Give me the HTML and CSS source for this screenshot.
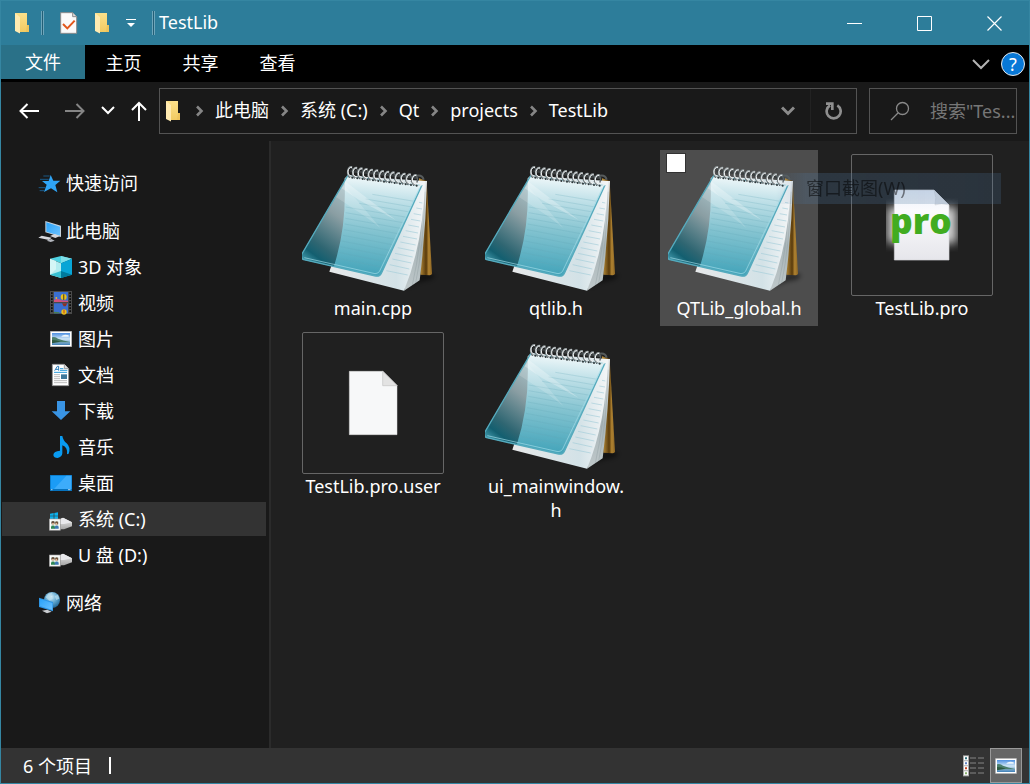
FILE: index.html
```html
<!DOCTYPE html>
<html lang="zh-CN">
<head>
    <meta charset="UTF-8">
    <meta name="viewport" content="width=device-width, initial-scale=1.0">
    <title>TestLib</title>
    <link rel="stylesheet" href="styles.css">
</head>
<body>
    <!-- Shared icons -->
    <svg class="sprite" width="0" height="0" aria-hidden="true">
        <defs>
            <linearGradient id="folderFill" x1="0" y1="0" x2="0" y2="1">
                <stop offset="0" stop-color="#fbe08a"/>
                <stop offset="1" stop-color="#f2cb62"/>
            </linearGradient>
            <linearGradient id="coverFill" x1="0.6" y1="0" x2="0.5" y2="1">
                <stop offset="0" stop-color="#f4fafb"/>
                <stop offset="0.2" stop-color="#c5e3ea"/>
                <stop offset="0.55" stop-color="#83c3d0"/>
                <stop offset="1" stop-color="#41a3b9"/>
            </linearGradient>
            <linearGradient id="glassFill" x1="0.7" y1="0" x2="0.3" y2="1">
                <stop offset="0" stop-color="#a9c3c9"/>
                <stop offset="0.35" stop-color="#8a9ea3"/>
                <stop offset="0.75" stop-color="#2f6672"/>
                <stop offset="0.88" stop-color="#135f70"/>
                <stop offset="1" stop-color="#4098aa"/>
            </linearGradient>
            <linearGradient id="paperFill" x1="0" y1="0" x2="1" y2="0">
                <stop offset="0" stop-color="#e6e8e9"/>
                <stop offset="0.7" stop-color="#d3e2e7"/>
                <stop offset="1" stop-color="#f4f6f7"/>
            </linearGradient>
            <linearGradient id="sideFill" x1="0" y1="0" x2="0" y2="1">
                <stop offset="0" stop-color="#e8ecee"/>
                <stop offset="0.6" stop-color="#a9b5b8"/>
                <stop offset="1" stop-color="#bfc8ca"/>
            </linearGradient>
            <linearGradient id="backFill" x1="0" y1="0" x2="1" y2="0">
                <stop offset="0" stop-color="#c2963f"/>
                <stop offset="0.55" stop-color="#583a0c"/>
                <stop offset="0.75" stop-color="#b08331"/>
                <stop offset="1" stop-color="#8c6524"/>
            </linearGradient>
            <linearGradient id="skyFill" x1="0" y1="0" x2="0" y2="1">
                <stop offset="0" stop-color="#4d8fe0"/>
                <stop offset="0.5" stop-color="#cfe6f6"/>
                <stop offset="1" stop-color="#3f7fb5"/>
            </linearGradient>
            <linearGradient id="screenFill" x1="0" y1="0" x2="1" y2="1">
                <stop offset="0" stop-color="#2aa2f8"/>
                <stop offset="1" stop-color="#6cc2ff"/>
            </linearGradient>
            <linearGradient id="driveFill" x1="0" y1="0" x2="0" y2="1">
                <stop offset="0" stop-color="#f2f2f2"/>
                <stop offset="1" stop-color="#a5a5a5"/>
            </linearGradient>
            <radialGradient id="globeFill" cx="0.45" cy="0.3" r="0.7">
                <stop offset="0" stop-color="#d5ecf5"/>
                <stop offset="0.5" stop-color="#65abd2"/>
                <stop offset="1" stop-color="#1f6796"/>
            </radialGradient>
            <linearGradient id="docFill" x1="0" y1="0" x2="0" y2="1">
                <stop offset="0" stop-color="#eaf0fb"/>
                <stop offset="0.3" stop-color="#fbfbfd"/>
                <stop offset="1" stop-color="#e6e6eb"/>
            </linearGradient>
            <filter id="blurGlow" x="-0.3" y="-0.3" width="1.6" height="1.6">
                <feGaussianBlur stdDeviation="14"/>
            </filter>
            <filter id="blurShadow" x="-0.3" y="-0.5" width="1.6" height="2">
                <feGaussianBlur stdDeviation="6"/>
            </filter>
            <clipPath id="glowClip"><path d="M708 160h216v160h-216z"/></clipPath>
            <clipPath id="coverClip"><path d="M176 92L398 122L278 383Q272 396 260 393L44 344Q35 340 38 328z"/></clipPath>
            <g id="ring" fill="none" stroke-linecap="round">
                <path d="M6 34q-10-12-2-26q8-8 13 4q2 8-1 12" stroke="#596164" stroke-width="4"/>
                <path d="M13 33q-14-4-12-18q3-14 12-13" stroke="#8f989b" stroke-width="4"/>
                <path d="M11 31q-12-5-9-16q3-12 11-11" stroke="#f2f4f4" stroke-width="3"/>
                <circle cx="15" cy="35" r="3" fill="#2c3437"/>
            </g>
        </defs>

        <symbol id="folder" viewBox="0 0 16 22">
            <path d="M1 1h12v12h2v7h-10z" fill="url(#folderFill)"/>
            <path d="M13 13h2v7h-3z" fill="#eec45c"/>
            <path d="M1 1l5 4v16.500l-5-2.500z" fill="#ffeab0"/>
        </symbol>

        <symbol id="chevron" viewBox="0 0 9 12">
            <path d="M2 1.500l4.500 4.500l-4.500 4.500" fill="none" stroke="#868686" stroke-width="2.600"/>
        </symbol>

        <symbol id="picture" viewBox="150 33 66 48">
            <path d="M150 33h66v48h-66z" fill="#8f8f8f"/>
            <path d="M152 35h62v44h-62z" fill="#fff"/>
            <path d="M156 39h54v36h-54z" fill="url(#skyFill)"/>
            <path d="M156 52q10-3 18 4q14 6 36 10v1h-54z" fill="#4b7f6c"/>
            <path d="M156 60q16 1 26 5l-26 5z" fill="#2d5940"/>
            <path d="M186 47q10-5 20-1v4h-22z" fill="#eef6fb"/>
        </symbol>

        <symbol id="drive" viewBox="0 0 69 42">
            <path d="M34 5l8-4l27 14v12l-24 9h-11z" fill="url(#driveFill)"/>
            <path d="M34 5l8-4l27 14l-24 5h-11z" fill="#e9e9ec"/>
            <path d="M1 5h33v34h-33z" fill="#fff" stroke="#9a9a9a" stroke-width="2"/>
            <path d="M6 10h23v24h-23z" fill="#dce8e0"/>
            <circle cx="12" cy="16" r="5" fill="#5a4433"/>
            <circle cx="23" cy="17" r="5" fill="#71543d"/>
            <circle cx="12" cy="19" r="3" fill="#e3b896"/>
            <circle cx="22" cy="20" r="3" fill="#e6bf9e"/>
            <path d="M6 34v-6q6-7 12 0v6z" fill="#2f8755"/>
            <path d="M17 34v-6q6-7 12 0v6z" fill="#3c79b4"/>
        </symbol>

        <symbol id="notepad" viewBox="39 27 426 426">
            <path d="M350 430L400 385L432 386Q445 392 425 404L390 412z" fill="#000" opacity="0.45" filter="url(#blurShadow)"/>
            <path d="M390 100L413 107L429 385Q429 391 422 391L394 389z" fill="url(#backFill)"/>
            <path d="M404 108L414 108Q410 260 392 406L345 437Q385 280 398 118z" fill="url(#sideFill)"/>
            <path d="M403 140Q398 300 370 420M408 140Q404 300 380 414" fill="none" stroke="#879598" stroke-width="1"/>
            <path d="M176 92L408 108Q402 300 345 437L121 380Q172 240 167 100z" fill="url(#paperFill)"/>
            <g stroke="#a5cdd9" stroke-width="2" fill="none">
                <path d="M390 172l10 2M382 189l17 3M374 206l22 4M366 223l28 5M358 240l32 6M350 257l37 7M342 274l42 8M334 291l46 9M326 308l50 10M318 325l53 11M310 342l57 12M302 359l59 13M292 377l64 13"/>
            </g>
            <path d="M176 92L398 122L278 383Q272 396 260 393L44 344Q35 340 38 328z" fill="url(#coverFill)"/>
            <g clip-path="url(#coverClip)">
                <path d="M176 92L30 330L36 350L134 366Q175 240 166 94z" fill="url(#glassFill)"/>
                <g stroke="#65a9b9" stroke-width="1.500" fill="none" opacity="0.5">
                    <path d="M170 186l190 32M170 203l183 32M169 220l176 32M167 237l170 31M165 254l164 31M162 271l158 30M158 288l155 30M154 305l151 30M149 322l148 30M144 339l145 30M250 148l132 22M230 162l145 25M210 175l158 27"/>
                </g>
                <path d="M165 120L275 250L230 215L140 155z" fill="#fff" opacity="0.16"/>
                <path d="M170 110L320 225L210 165L158 130z" fill="#fff" opacity="0.28"/>
            </g>
            <path d="M176 92L398 122L278 383Q272 396 260 393L44 344Q35 340 38 328z" fill="none" stroke="#55aabd" stroke-width="4"/>
            <path d="M392 128L272 378Q268 386 258 386L46 338" fill="none" stroke="#a1dce8" stroke-width="2"/>
            <path d="M178 92L240 98L398 122" fill="none" stroke="#e5f0f2" stroke-width="3"/>
            <path d="M184 78L388 99" stroke="#3b3f40" stroke-width="8"/>
            <path d="M382 92q18-4 22 12" fill="none" stroke="#565b5c" stroke-width="6"/>
            <use href="#ring" x="175" y="63"/>
            <use href="#ring" x="190" y="65"/>
            <use href="#ring" x="206" y="67"/>
            <use href="#ring" x="221" y="69"/>
            <use href="#ring" x="237" y="71"/>
            <use href="#ring" x="253" y="73"/>
            <use href="#ring" x="270" y="75"/>
            <use href="#ring" x="286" y="77"/>
            <use href="#ring" x="302" y="79"/>
            <use href="#ring" x="318" y="81"/>
            <use href="#ring" x="335" y="83"/>
            <use href="#ring" x="351" y="85"/>
            <use href="#ring" x="368" y="87"/>
        </symbol>
    </svg>

    <div class="window">
        <header class="titlebar">
            <div class="quick-access">
                <svg class="folder-icon"><use href="#folder"/></svg>
                <span class="separator"></span>
                <button class="quick-btn" aria-label="属性">
                    <svg width="18" height="22" viewBox="0 0 54 66">
                        <path d="M2 2h36l12 12v50h-48z" fill="#fafafa" stroke="#8c8c8c" stroke-width="3"/>
                        <path d="M38 2v12h12" fill="#ddd" stroke="#8c8c8c" stroke-width="3"/>
                        <path d="M9 36l13 13l22-23" fill="none" stroke="#e2571c" stroke-width="6"/>
                    </svg>
                </button>
                <button class="quick-btn" aria-label="新建文件夹">
                    <svg class="folder-icon"><use href="#folder"/></svg>
                </button>
                <button class="quick-btn" aria-label="自定义快速访问工具栏">
                    <svg width="10" height="10" viewBox="0 0 10 10"><path d="M0 1h10v1H0zM1 5h8L5 9z" fill="#fff"/></svg>
                </button>
                <span class="separator"></span>
            </div>
            <h1 class="title">TestLib</h1>
            <div class="window-controls">
                <button aria-label="最小化"><svg width="15" height="15"><path d="M0 7.500h15" stroke="#fff"/></svg></button>
                <button aria-label="最大化"><svg width="15" height="15"><path d="M.5.500h14v14h-14z" fill="none" stroke="#fff"/></svg></button>
                <button aria-label="关闭"><svg width="15" height="15"><path d="M.5.500l14 14M14.500.500l-14 14" stroke="#fff" stroke-width="1.200"/></svg></button>
            </div>
        </header>

        <div class="ribbon">
            <button class="tab tab-file">文件</button>
            <button class="tab">主页</button>
            <button class="tab">共享</button>
            <button class="tab">查看</button>
            <div class="ribbon-right">
                <button class="ribbon-btn" aria-label="展开功能区"><svg width="18" height="12" viewBox="0 0 18 12"><path d="M1 2l8 8l8-8" fill="none" stroke="#b4b4b4" stroke-width="2"/></svg></button>
                <button class="help" aria-label="帮助">?</button>
            </div>
        </div>

        <div class="navbar">
            <div class="nav-buttons">
                <button aria-label="后退"><svg width="20" height="16" viewBox="0 0 20 16"><path d="M20 8H2M8.500 1L1.500 8l7 7" fill="none" stroke="#fff" stroke-width="2"/></svg></button>
                <button aria-label="前进"><svg width="20" height="16" viewBox="0 0 20 16"><path d="M0 8h18M11.500 1l7 7l-7 7" fill="none" stroke="#858585" stroke-width="2"/></svg></button>
                <button aria-label="最近位置"><svg width="14" height="9" viewBox="0 0 14 9"><path d="M1 1l6 6l6-6" fill="none" stroke="#fff" stroke-width="2"/></svg></button>
                <button aria-label="上移"><svg width="16" height="20" viewBox="0 0 16 20"><path d="M8 20V2M1 9l7-7l7 7" fill="none" stroke="#fff" stroke-width="2"/></svg></button>
            </div>
            <div class="address">
                <svg class="folder-icon"><use href="#folder"/></svg>
                <svg class="chevron"><use href="#chevron"/></svg>
                <a href="#pc">此电脑</a>
                <svg class="chevron"><use href="#chevron"/></svg>
                <a href="#c">系统 (C:)</a>
                <svg class="chevron"><use href="#chevron"/></svg>
                <a href="#qt">Qt</a>
                <svg class="chevron"><use href="#chevron"/></svg>
                <a href="#projects">projects</a>
                <svg class="chevron"><use href="#chevron"/></svg>
                <a href="#testlib">TestLib</a>
                <button class="address-drop" aria-label="以前的位置"><svg width="14" height="10" viewBox="0 0 14 10"><path d="M1 1.500l6 6l6-6" fill="none" stroke="#8b8b8b" stroke-width="3"/></svg></button>
                <button class="address-refresh" aria-label="刷新"><svg width="18" height="18" viewBox="0 0 54 54"><path d="M37 10A21 21 0 1 1 15 10" fill="none" stroke="#8f8f8f" stroke-width="8"/><path d="M3 5h19v19" fill="none" stroke="#8f8f8f" stroke-width="8"/></svg></button>
            </div>
            <label class="search">
                <svg width="20" height="20" viewBox="0 0 20 20"><circle cx="12.500" cy="7.500" r="6" fill="none" stroke="#8a8a8a" stroke-width="1.300"/><path d="M8 12l-7 7" stroke="#8a8a8a" stroke-width="1.300"/></svg>
                <input type="text" placeholder='搜索"Tes...' aria-label="搜索">
            </label>
        </div>

        <div class="content">
            <nav class="sidebar">
                <a class="node root" href="#quick">
                    <svg viewBox="114 33 72 72"><path d="M152 45l8 17h21l-15 13l6 22l-19-12l-21 11l8-22l-14-11h20z" fill="#2fa4f5"/><path d="M130 48h19M120 58h26M116 83h20M119 92h14" stroke="#1b79bd" stroke-width="2"/></svg>
                    快速访问
                </a>
                <a class="node root" href="#pc">
                    <svg viewBox="114 177 72 72"><path d="M136 183l47 14v34l-47-14z" fill="#c6d2dc"/><path d="M139 187l41 13v27l-41-12z" fill="url(#screenFill)"/><path d="M150 228l14-6l16 6l-14 6zM115 233l10-6l30 6l-8 7z" fill="#d5d7dc"/><path d="M140 242l14-5l10 5l-12 4z" fill="#b5b8bf"/></svg>
                    此电脑
                </a>
                <a class="node" href="#3d">
                    <svg viewBox="150 285 72 72"><path d="M150 296l33-8l33 8l-33 14z" fill="#4ed2e2"/><path d="M183 288l33 8l-33 14z" fill="#7edfe9"/><path d="M150 296l33 14v44l-33-10z" fill="#b4edf0"/><path d="M150 296l18 7v25l-18 16z" fill="#d5f6f6"/><path d="M216 296l-33 14v44l33-10z" fill="#08a5d6"/><path d="M183 333l33 11l-33 10z" fill="#007a9c"/><path d="M150 344l33-11v21z" fill="#38c0d2"/></svg>
                    3D 对象
                </a>
                <a class="node" href="#videos">
                    <svg viewBox="150 393 72 72"><path d="M150 393h66v69h-66z" fill="#4a4a4a"/><path d="M155.500 397v63M210.500 397v63" stroke="#0d0d0d" stroke-width="5" stroke-dasharray="5 4"/><path d="M162 396h42v30h-42zM162 430h42v30h-42z" fill="#3b6fd0"/><path d="M162 419q12-5 22 2l20 1v4h-42z" fill="#d2527c"/><circle cx="191" cy="411" r="9" fill="#e9c01d"/><path d="M191 403v17" stroke="#6b5a22" stroke-width="4"/><circle cx="169" cy="414" r="3" fill="#e8b82d"/><path d="M186 430h16l-5 9h-6z" fill="#8d3222"/><circle cx="192" cy="456" r="8" fill="#e9c01d"/><path d="M192 449v11" stroke="#c23c20" stroke-width="3"/><path d="M162 455l16 2v3h-16z" fill="#477f51"/></svg>
                    视频
                </a>
                <a class="node" href="#pictures">
                    <svg viewBox="150 21 72 72"><use href="#picture" x="150" y="33" width="66" height="48"/></svg>
                    图片
                </a>
                <a class="node" href="#documents">
                    <svg viewBox="150 129 72 72"><path d="M157 133h36l13 13v51h-49z" fill="#fff" stroke="#8e8e8e" stroke-width="2.500"/><path d="M193 133v13h13" fill="#ddd" stroke="#8e8e8e" stroke-width="2.500"/><path d="M164 152l8-13h4v13M168 148h7" fill="none" stroke="#2678b5" stroke-width="3"/><path d="M180 146h10M180 151h22M162 157h39" stroke="#2b9ad8" stroke-width="3"/><path d="M162 164h18M162 170h18M162 176h18M162 182h39M162 188h39" stroke="#999" stroke-width="2"/><path d="M183 163h18v14h-18z" fill="#3e789b"/></svg>
                    文档
                </a>
                <a class="node" href="#downloads">
                    <svg viewBox="150 237 72 72"><path d="M171 243h24v31h16l-28 26l-28-26h16z" fill="#3994e4"/></svg>
                    下载
                </a>
                <a class="node" href="#music">
                    <svg viewBox="150 345 72 72"><path d="M180 348h7q3 15 13 22q13 12 6 31l-5 2q3-21-14-27v24q-1 11-14 14q-12 0-13-9q1-12 20-13z" fill="#099bf1"/></svg>
                    音乐
                </a>
                <a class="node" href="#desktop">
                    <svg viewBox="150 453 72 72"><path d="M150 465h66v48h-66z" fill="#0672bd"/><path d="M152 467h62v40h-62z" fill="#1b9cf6"/><path d="M199 467h15v40h-52z" fill="#3dacfa"/><path d="M154 509h3M204 509h2M208 509h3" stroke="#fff" stroke-width="3"/></svg>
                    桌面
                </a>
                <a class="node selected" href="#c">
                    <svg viewBox="150 51 72 72"><path d="M150 71l11-2v8h-11zM163 69l11-2v10h-11zM150 79h11v8h-11zM163 79h11v8h-11z" fill="#0db1ed"/><use href="#drive" x="147" y="82" width="69" height="42"/></svg>
                    系统 (C:)
                </a>
                <a class="node" href="#d">
                    <svg viewBox="150 159 72 72"><use href="#drive" x="147" y="190" width="69" height="42"/></svg>
                    U 盘 (D:)
                </a>
                <a class="node root" href="#network">
                    <svg viewBox="114 303 72 72"><circle cx="156" cy="330" r="24" fill="url(#globeFill)"/><path d="M137 322q8-14 20-13l-5 10l7 7l-10 6zM164 318l10-4l4 12l-9 4z" fill="#bde0ee" opacity="0.700"/><path d="M117 323l42 13v28l-42-13z" fill="#2d94e3"/><path d="M120 327l37 12v21l-37-12z" fill="url(#screenFill)"/><path d="M126 362l16-3l13 6l-14 5z" fill="#c9ccd0"/></svg>
                    网络
                </a>
            </nav>

            <main class="files">
                <div class="file">
                    <svg class="thumb"><use href="#notepad"/></svg>
                    <span class="name">main.cpp</span>
                </div>
                <div class="file">
                    <svg class="thumb"><use href="#notepad"/></svg>
                    <span class="name">qtlib.h</span>
                </div>
                <div class="file hovered">
                    <input type="checkbox" class="file-check" aria-label="选择 QTLib_global.h">
                    <svg class="thumb"><use href="#notepad"/></svg>
                    <span class="name">QTLib_global.h</span>
                </div>
                <div class="file">
                    <svg class="thumb framed" viewBox="606 30 420 420">
                        <g clip-path="url(#glowClip)"><path d="M712 185h208v110h-208z" fill="#fff" opacity="0.8" filter="url(#blurGlow)"/></g>
                        <path d="M733 135h119l45 45v165h-164z" fill="url(#docFill)" stroke="#d3d3d8" stroke-width="2"/>
                        <path d="M852 135l45 45q-24-8-42 0q6-22-3-45z" fill="#dfe3ea" stroke="#c9ccd3" stroke-width="1.500"/>
                        <text class="pro-text" x="720" y="268">pro</text>
                    </svg>
                    <span class="name">TestLib.pro</span>
                </div>
                <div class="file">
                    <svg class="thumb framed" viewBox="39 24 420 420">
                        <path d="M178 139h101l42 42v148h-143z" fill="#f7f8f9" stroke="#ddd" stroke-width="1.500"/>
                        <path d="M278 139l43 43h-43z" fill="#e3e3e3" stroke="#c4c4c4" stroke-width="2"/>
                    </svg>
                    <span class="name">TestLib.pro.user</span>
                </div>
                <div class="file">
                    <svg class="thumb"><use href="#notepad"/></svg>
                    <span class="name">ui_mainwindow.h</span>
                </div>
                <!-- fading menu item -->
                <div class="menu-ghost">窗口截图(W)</div>
            </main>
        </div>

        <footer class="statusbar">
            <span>6 个项目</span>
            <span class="status-sep"></span>
            <div class="view-buttons">
                <button aria-label="详细信息">
                    <svg width="22" height="22" viewBox="0 0 66 66"><path d="M0 1h18v63h-18z" fill="#aaa"/><path d="M3 4h12v12h-12zM3 19h12v12h-12zM3 34h12v12h-12zM3 49h12v12h-12z" fill="#fff"/><path d="M6 7h6v6h-6z" fill="#2d6f7a"/><path d="M6 22h6v6h-6z" fill="#5b7fc0"/><path d="M6 37h6v6h-6z" fill="#c8401f"/><path d="M6 52h6v6h-6z" fill="#88b06c"/><path d="M21 9h18M45 9h18M21 24h18M45 24h18M21 39h18M45 39h18M21 54h18M45 54h18" stroke="#858585" stroke-width="3"/></svg>
                </button>
                <button class="active" aria-label="大缩略图">
                    <svg width="22" height="16"><use href="#picture"/></svg>
                </button>
            </div>
        </footer>
    </div>
</body>
</html>
```
FILE: styles.css
```css
* {
    box-sizing: border-box;
}

body {
    margin: 0;
    font-family: "Noto Sans", "Noto Sans CJK SC", sans-serif;
    font-size: 18px;
    line-height: 24px;
    color: #fff;
    background: #202020;
}

button {
    display: flex;
    align-items: center;
    justify-content: center;
    padding: 0;
    border: none;
    background: none;
    color: inherit;
    font: inherit;
}

a {
    color: inherit;
    text-decoration: none;
}

svg {
    display: block;
    flex: none;
}

.sprite {
    position: absolute;
}

.window {
    display: flex;
    flex-direction: column;
    min-height: 100vh;
    border: 1px solid #3586a2;
}

.folder-icon {
    width: 16px;
    height: 22px;
}

/* Title bar */
.titlebar {
    display: flex;
    align-items: center;
    height: 44px;
    background: #2d7d9a;
}

.quick-access {
    display: flex;
    align-items: center;
    gap: 16px;
    padding-left: 13px;
}

.quick-access .separator {
    width: 3px;
    height: 24px;
    margin-left: -5px;
    border: solid #6ea6bb;
    border-width: 0 1px;
    background: #235f76;
}

.quick-access .separator:last-child {
    margin-left: 0;
}

.title {
    flex: 1;
    margin: 0;
    padding: 0 0 2px 4px;
    font-size: 18px;
    font-weight: 400;
}

.window-controls {
    display: flex;
}

.window-controls button {
    width: 70px;
    height: 44px;
}

/* Ribbon */
.ribbon {
    display: flex;
    height: 37px;
    background: #000;
}

.tab {
    width: 77px;
    height: 36px;
}

.tab-file {
    width: 84px;
    height: 34px;
    background: #2a7188;
}

.ribbon-right {
    display: flex;
    align-items: center;
    gap: 11px;
    margin-left: auto;
    padding-right: 4px;
}

.help {
    width: 24px;
    height: 24px;
    border: 1px solid #e8e8e8;
    border-radius: 50%;
    background: #0878d7;
}

/* Address row */
.navbar {
    display: flex;
    align-items: center;
    gap: 12px;
    height: 59px;
    padding: 0 12px 2px 18px;
    background: #191919;
}

.nav-buttons {
    display: flex;
    align-items: center;
    gap: 16px;
}

.nav-buttons button:nth-child(2) {
    margin-left: 10px;
}

.address {
    display: flex;
    flex: 1;
    align-items: center;
    gap: 11px;
    height: 46px;
    padding-left: 5px;
    border: 1px solid #535353;
}

.address a {
    padding-bottom: 2px;
}

.address .folder-icon {
    margin-right: 3px;
}

.chevron {
    width: 9px;
    height: 12px;
}

.address-drop {
    width: 44px;
    height: 44px;
    margin-left: auto;
    margin-right: -11px;
}

.address-refresh {
    width: 46px;
    height: 44px;
    border-left: 1px solid #222;
}

.search {
    display: flex;
    align-items: center;
    gap: 20px;
    width: 148px;
    height: 46px;
    padding-left: 20px;
    border: 1px solid #535353;
}

.search input {
    flex: 1;
    min-width: 0;
    padding: 0;
    border: none;
    outline: none;
    background: none;
    color: #fff;
    font: inherit;
}

.search input::placeholder {
    color: #767676;
    opacity: 1;
}

/* Body */
.content {
    display: flex;
    flex: 1;
}

.sidebar {
    display: flex;
    flex-direction: column;
    gap: 2px;
    width: 270px;
    padding: 25px 3px 0 1px;
    background: #191919;
    border-right: 2px solid #2b2b2b;
}

.node {
    display: flex;
    align-items: center;
    gap: 4px;
    height: 34px;
    padding-left: 48px;
}

.node svg {
    width: 24px;
    height: 24px;
    overflow: visible;
}

.node.root {
    padding-left: 36px;
}

.node + .root {
    margin-top: 12px;
}

.node.selected {
    background: #333;
}

.files {
    position: relative;
    display: grid;
    flex: 1;
    grid-template-columns: repeat(auto-fill, 158px);
    align-content: start;
    gap: 2px 25px;
    padding: 9px 0 0 23px;
    background: #202020;
}

.file {
    position: relative;
    display: flex;
    flex-direction: column;
    align-items: center;
    padding: 4px 8px 6px;
}

.file.hovered {
    background: #4d4d4d;
}

.file-check {
    position: absolute;
    top: 3px;
    left: 6px;
    width: 20px;
    height: 20px;
    margin: 0;
    appearance: none;
    border: 1px solid #333;
    background: #fff;
}

.thumb {
    width: 142px;
    height: 142px;
}

.thumb.framed {
    border: 1px solid #666;
    border-radius: 2px;
}

.pro-text {
    font-family: "Open Sans", sans-serif;
    font-size: 106px;
    font-weight: 800;
    fill: #41ac20;
}

.name {
    max-width: 100%;
    text-align: center;
    overflow-wrap: anywhere;
}

.menu-ghost {
    position: absolute;
    top: 32px;
    right: 28px;
    width: 225px;
    height: 31px;
    padding-left: 30px;
    line-height: 31px;
    color: rgba(0, 0, 0, 0.5);
    background: linear-gradient(to right, rgba(80, 120, 160, 0), rgba(80, 120, 160, 0.25) 30px);
    mask-image: linear-gradient(to right, #000 60px, rgba(0, 0, 0, 0.9));
}

/* Status bar */
.statusbar {
    display: flex;
    align-items: center;
    height: 35px;
    padding: 0 7px 0 22px;
    background: #333;
}

.status-sep {
    width: 2px;
    height: 17px;
    margin-left: 17px;
    background: #fff;
}

.view-buttons {
    display: flex;
    margin-left: auto;
}

.view-buttons button {
    width: 32px;
    height: 35px;
}

.view-buttons .active {
    border: 1px solid #999;
    background: #666;
}
```
